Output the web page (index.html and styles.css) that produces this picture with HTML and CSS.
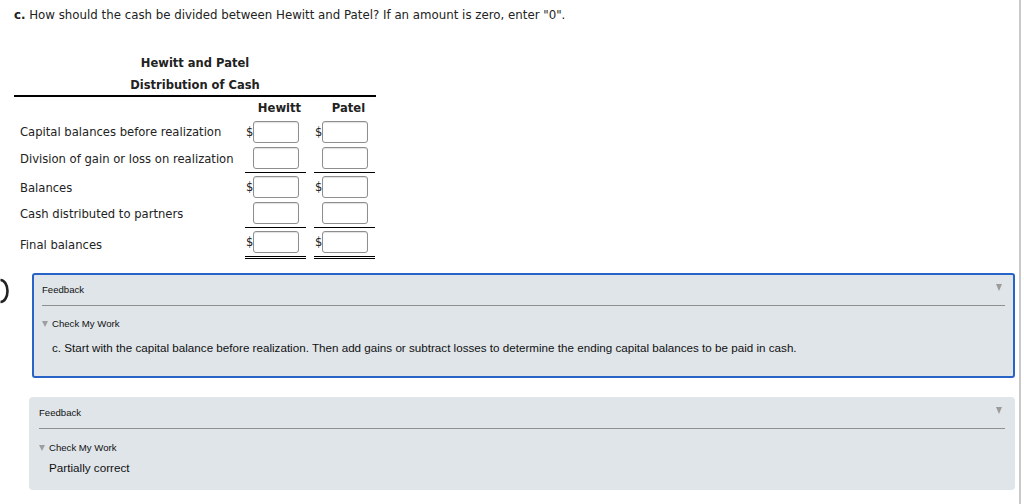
FILE: index.html
```html
<!DOCTYPE html>
<html>
<head>
<meta charset="utf-8">
<link rel="stylesheet" href="styles.css">
</head>
<body>
<div class="page">
  <p class="question"><b>c.</b> How should the cash be divided between Hewitt and Patel? If an amount is zero, enter "0".</p>

  <div class="sheet">
    <div class="title">Hewitt and Patel</div>
    <div class="title title-last">Distribution of Cash</div>
    <div class="grid">
      <div class="label"></div>
      <div class="colhead">Hewitt</div>
      <div class="colhead">Patel</div>

      <div class="label">Capital balances before realization</div>
      <div class="cell"><span class="cur">$</span><span class="inp"></span></div>
      <div class="cell"><span class="cur">$</span><span class="inp"></span></div>

      <div class="label">Division of gain or loss on realization</div>
      <div class="cell line"><span class="cur"></span><span class="inp"></span></div>
      <div class="cell line"><span class="cur"></span><span class="inp"></span></div>

      <div class="label after">Balances</div>
      <div class="cell after"><span class="cur">$</span><span class="inp"></span></div>
      <div class="cell after"><span class="cur">$</span><span class="inp"></span></div>

      <div class="label">Cash distributed to partners</div>
      <div class="cell line"><span class="cur"></span><span class="inp"></span></div>
      <div class="cell line"><span class="cur"></span><span class="inp"></span></div>

      <div class="label after">Final balances</div>
      <div class="cell after double"><span class="cur">$</span><span class="inp"></span></div>
      <div class="cell after double"><span class="cur">$</span><span class="inp"></span></div>
    </div>
  </div>

  <div class="fb-row">
    <svg class="edge-icon" width="10" height="26" viewBox="0 0 10 26"><path d="M0.5 2 A 7 11 0 0 1 0.5 24" fill="none" stroke="#222" stroke-width="2.6"/></svg>
    <div class="fb fb-active">
      <div class="fb-head"><span>Feedback</span><span class="tri-r"></span></div>
      <div class="cmw"><span class="tri"></span>Check My Work</div>
      <div class="hint">c. Start with the capital balance before realization. Then add gains or subtract losses to determine the ending capital balances to be paid in cash.</div>
    </div>
  </div>

  <div class="fb fb-plain">
    <div class="fb-head"><span>Feedback</span><span class="tri-r"></span></div>
    <div class="cmw"><span class="tri"></span>Check My Work</div>
    <div class="result">Partially correct</div>
  </div>
</div>
</body>
</html>
```
FILE: styles.css
```css
html, body {
  margin: 0;
  padding: 0;
  background: #fff;
}
.page {
  width: 1021px;
  min-height: 504px;
  border-right: 2px solid #c9c9c9;
  box-sizing: border-box;
  font-family: "DejaVu Sans", Verdana, sans-serif;
  color: #222;
}
.question {
  margin: 0;
  padding: 8px 0 0 14px;
  font-size: 11.8px;
  line-height: 14px;
}
.question b {
  font-weight: bold;
}
.sheet {
  margin: 31px 0 0 14px;
  width: 362px;
}
.title {
  text-align: center;
  font-weight: bold;
  font-size: 11.5px;
  line-height: 21px;
}
.title-last {
  padding-top: 1px;
  line-height: 20px;
  border-bottom: 2px solid #000;
}
.grid {
  display: grid;
  grid-template-columns: 223px 61px 61px;
  column-gap: 8px;
  font-size: 11.6px;
}
.colhead {
  font-weight: bold;
  text-align: center;
  padding: 4px 0 4px 8px;
  line-height: 14px;
}
.label {
  display: flex;
  align-items: center;
  padding-left: 6px;
  line-height: 14px;
}
.cell {
  display: flex;
  align-items: center;
  padding: 2px 0 2px 0;
}
.cell.line {
  padding-bottom: 3px;
  border-bottom: 1px solid #000;
}
.cell.after {
  padding-top: 3px;
}
.label.after {
  padding-top: 3px;
}
.cell.double {
  padding-bottom: 3px;
  border-bottom: 3px double #000;
}
.cur {
  width: 8px;
  text-align: left;
  font-size: 11.5px;
  padding-left: 1px;
  box-sizing: border-box;
}
.inp {
  width: 46px;
  height: 22px;
  box-sizing: border-box;
  border: 1px solid #8e8e8e;
  border-radius: 3px;
  background: #fff;
  box-shadow: inset 0 1px 1px rgba(0,0,0,0.12);
}
.fb-row {
  display: flex;
  align-items: flex-start;
  margin-top: 14px;
}
.edge-icon {
  margin-top: 5px;
  width: 10px;
  flex: none;
  margin-right: 22px;
}
.fb {
  font-family: "Liberation Sans", Arial, sans-serif;
  color: #111;
  background: #dfe5e9;
  box-sizing: border-box;
}
.fb-active {
  width: 983px;
  border: 2px solid #2863c8;
  border-radius: 3px;
  padding: 0 8px 21px 8px;
  height: 105px;
}
.fb-plain {
  margin: 19px 0 0 29px;
  width: 986px;
  border-radius: 4px;
  padding: 0 10px 0 10px;
  height: 93px;
}
.fb-head {
  display: flex;
  justify-content: space-between;
  align-items: flex-start;
  font-size: 9.6px;
  line-height: 12px;
  padding-top: 9px;
  padding-bottom: 9px;
  border-bottom: 1px solid #8f8f8f;
}
.fb-plain .fb-head {
  padding-top: 10px;
  padding-bottom: 9px;
}
.tri-r {
  width: 0;
  height: 0;
  border-left: 3.5px solid transparent;
  border-right: 3.5px solid transparent;
  border-top: 7px solid #9b9b9b;
  margin-right: 3px;
  margin-top: 0px;
}
.cmw {
  font-size: 9.6px;
  line-height: 12px;
  margin-top: 12px;
  display: flex;
  align-items: center;
}
.fb-plain .cmw {
  margin-top: 13px;
}
.tri {
  width: 0;
  height: 0;
  border-left: 3px solid transparent;
  border-right: 3px solid transparent;
  border-top: 6px solid #9e9e9e;
  margin-right: 4px;
  margin-top: -1px;
}
.hint {
  font-size: 11.65px;
  line-height: 14px;
  margin-top: 11px;
  padding-left: 10px;
}
.result {
  font-size: 11.7px;
  line-height: 14px;
  margin-top: 7px;
  padding-left: 10px;
}
```
